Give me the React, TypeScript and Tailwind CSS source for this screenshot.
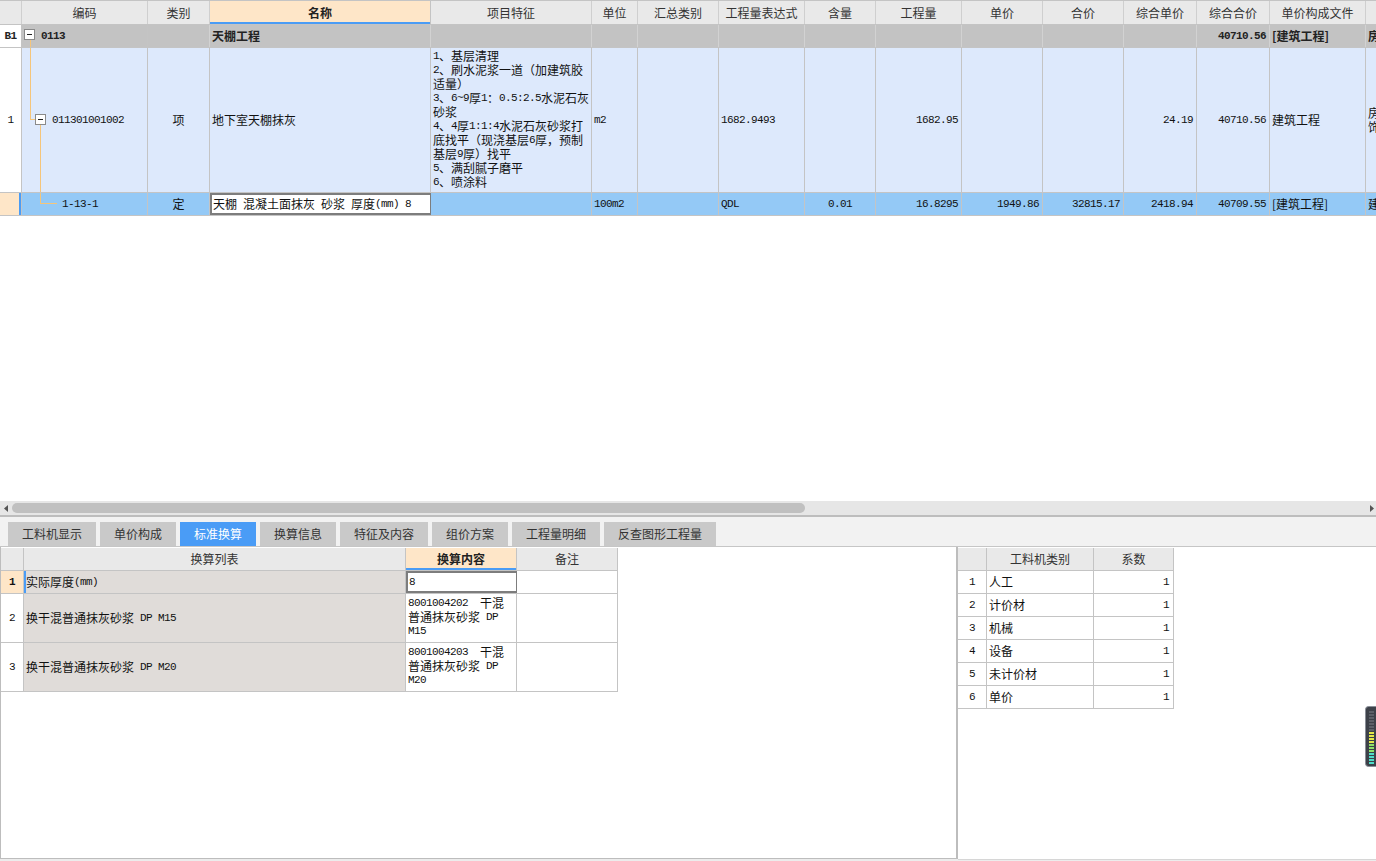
import React from "react";

const MONO = "font-['Liberation_Mono',monospace] text-[11px] tracking-[-0.6px] whitespace-pre";

function T({ s }: { s: string }) {
  const parts = s.split(/([\x20-\x7E]+)/).filter((p) => p !== "");
  return (
    <>
      {parts.map((p, i) =>
        /^[\x20-\x7E]+$/.test(p) ? (
          <span key={i} className={MONO}>
            {p}
          </span>
        ) : (
          <span key={i}>{p}</span>
        )
      )}
    </>
  );
}

function L({ s }: { s: string }) {
  return (
    <div className="h-[14px] flex items-center whitespace-nowrap">
      <T s={s} />
    </div>
  );
}

const W = [
  "w-[22px]",
  "w-[126px]",
  "w-[62px]",
  "w-[221px]",
  "w-[161px]",
  "w-[46px]",
  "w-[81px]",
  "w-[86px]",
  "w-[71px]",
  "w-[86px]",
  "w-[81px]",
  "w-[81px]",
  "w-[73px]",
  "w-[73px]",
  "w-[96px]",
  "w-[90px]",
];

const HEAD = [
  "",
  "编码",
  "类别",
  "名称",
  "项目特征",
  "单位",
  "汇总类别",
  "工程量表达式",
  "含量",
  "工程量",
  "单价",
  "合价",
  "综合单价",
  "综合合价",
  "单价构成文件",
  "",
];

const AL: Record<string, string> = {
  l: "justify-start pl-[2px]",
  c: "justify-center",
  r: "justify-end pr-[3px]",
};

type CP = {
  w: string;
  a?: "l" | "c" | "r";
  top?: boolean;
  x?: string;
  children?: React.ReactNode;
};

function C({ w, a = "l", top = false, x = "", children }: CP) {
  return (
    <div
      className={`${w} shrink-0 h-full flex ${top ? "items-start" : "items-center"} border-r border-[#c4c4c4] overflow-hidden whitespace-nowrap ${AL[a]} ${x}`}
    >
      {children}
    </div>
  );
}

function Box({ x }: { x: string }) {
  return (
    <div
      className={`absolute ${x} w-[11px] h-[11px] border border-[#8a8a8a] bg-white flex items-center justify-center`}
    >
      <div className="w-[5px] h-[1px] bg-[#222]" />
    </div>
  );
}

const FEATURES = [
  "1、基层清理",
  "2、刷水泥浆一道（加建筑胶",
  "适量）",
  "3、6~9厚1：0.5:2.5水泥石灰",
  "砂浆",
  "4、4厚1:1:4水泥石灰砂浆打",
  "底找平（现浇基层6厚，预制",
  "基层9厚）找平",
  "5、满刮腻子磨平",
  "6、喷涂料",
];

function MainTable() {
  return (
    <div className="h-[501px] shrink-0 overflow-hidden bg-white">
      {/* header */}
      <div className="flex w-max h-[25px] border-t border-b border-[#c4c4c4] bg-[#e9e9e9] text-[#333]">
        {HEAD.map((h, i) =>
          i === 3 ? (
            <C
              key={i}
              w={W[i]}
              a="c"
              x="bg-[#fee6c8] font-bold text-[#222] shadow-[inset_0_-2px_0_#4a9cf5]"
            >
              {h}
            </C>
          ) : (
            <C key={i} w={W[i]} a="c" x="border-[#cfcfcf]">
              {h}
            </C>
          )
        )}
      </div>

      {/* B1 row */}
      <div className="flex w-max h-[23px] border-b border-[#c4c4c4] bg-[#c3c3c3] font-bold text-[#222]">
        <C w={W[0]} a="c" x="bg-white">
          <T s="B1" />
        </C>
        <C w={W[1]} x="relative !pl-[19px]">
          <Box x="left-[2px] top-[4px]" />
          <div className="absolute left-[8px] top-[15px] bottom-0 w-[1px] bg-[#f5c57a]" />
          <T s="0113" />
        </C>
        <C w={W[2]} x="border-[#d2d2d2]" />
        <C w={W[3]} x="border-[#d2d2d2]">天棚工程</C>
        <C w={W[4]} x="border-[#d2d2d2]" />
        <C w={W[5]} x="border-[#d2d2d2]" />
        <C w={W[6]} x="border-[#d2d2d2]" />
        <C w={W[7]} x="border-[#d2d2d2]" />
        <C w={W[8]} x="border-[#d2d2d2]" />
        <C w={W[9]} x="border-[#d2d2d2]" />
        <C w={W[10]} x="border-[#d2d2d2]" />
        <C w={W[11]} x="border-[#d2d2d2]" />
        <C w={W[12]} x="border-[#d2d2d2]" />
        <C w={W[13]} a="r" x="border-[#d2d2d2]">
          <T s="40710.56" />
        </C>
        <C w={W[14]} x="border-[#d2d2d2]">
          [建筑工程]
        </C>
        <C w={W[15]} x="border-[#d2d2d2]">房屋建筑与装饰工程</C>
      </div>

      {/* Row 1 */}
      <div className="flex w-max h-[145px] border-b border-[#c4c4c4] bg-[#dde9fc] text-[#111]">
        <C w={W[0]} a="c" x="bg-white">
          <T s="1" />
        </C>
        <C w={W[1]} x="relative !pl-[30px]">
          <div className="absolute left-[8px] top-0 h-[71px] w-[1px] bg-[#f5c57a]" />
          <div className="absolute left-[8px] top-[71px] h-[1px] w-[5px] bg-[#f5c57a]" />
          <Box x="left-[13px] top-[66px]" />
          <div className="absolute left-[18px] top-[77px] bottom-0 w-[1px] bg-[#f5c57a]" />
          <T s="011301001002" />
        </C>
        <C w={W[2]} a="c">
          项
        </C>
        <C w={W[3]}>地下室天棚抹灰</C>
        <C w={W[4]} top x="pt-[1px]">
          <div className="flex flex-col">
            {FEATURES.map((f, i) => (
              <L key={i} s={f} />
            ))}
          </div>
        </C>
        <C w={W[5]}>
          <T s="m2" />
        </C>
        <C w={W[6]} />
        <C w={W[7]}>
          <T s="1682.9493" />
        </C>
        <C w={W[8]} />
        <C w={W[9]} a="r">
          <T s="1682.95" />
        </C>
        <C w={W[10]} />
        <C w={W[11]} />
        <C w={W[12]} a="r">
          <T s="24.19" />
        </C>
        <C w={W[13]} a="r">
          <T s="40710.56" />
        </C>
        <C w={W[14]}>建筑工程</C>
        <C w={W[15]}>
          <div className="flex flex-col">
            <L s="房屋建筑与装" />
            <L s="饰工程" />
          </div>
        </C>
      </div>

      {/* Row 2 */}
      <div className="flex w-max h-[23px] border-b border-[#c4c4c4] bg-[#94c9f6] text-[#111]">
        <C w={W[0]} x="bg-[#fee6c8] shadow-[inset_-2px_0_0_#4a9cf5]" />
        <C w={W[1]} x="relative !pl-[40px]">
          <div className="absolute left-[18px] top-0 h-[10px] w-[1px] bg-[#f5c57a]" />
          <div className="absolute left-[18px] top-[10px] h-[1px] w-[17px] bg-[#f5c57a]" />
          <T s="1-13-1" />
        </C>
        <C w={W[2]} a="c">
          定
        </C>
        <C w={W[3]} x="bg-white border-2 !border-[#7d7d7d] !pl-[1px]">
          <T s="天棚 混凝土面抹灰 砂浆 厚度(mm) 8" />
        </C>
        <C w={W[4]} />
        <C w={W[5]}>
          <T s="100m2" />
        </C>
        <C w={W[6]} />
        <C w={W[7]}>
          <T s="QDL" />
        </C>
        <C w={W[8]} a="c">
          <T s="0.01" />
        </C>
        <C w={W[9]} a="r">
          <T s="16.8295" />
        </C>
        <C w={W[10]} a="r">
          <T s="1949.86" />
        </C>
        <C w={W[11]} a="r">
          <T s="32815.17" />
        </C>
        <C w={W[12]} a="r">
          <T s="2418.94" />
        </C>
        <C w={W[13]} a="r">
          <T s="40709.55" />
        </C>
        <C w={W[14]}>[建筑工程]</C>
        <C w={W[15]}>建筑工程</C>
      </div>
    </div>
  );
}

function Scrollbar() {
  return (
    <div className="h-[14px] shrink-0 bg-[#e6e6e6] flex items-center">
      <div className="w-[12px] flex justify-center">
        <svg width="4" height="7" viewBox="0 0 4 7">
          <path d="M4 0 L0 3.5 L4 7Z" fill="#555" />
        </svg>
      </div>
      <div className="w-[793px] h-[10px] rounded-full bg-[#c0c0c0]" />
      <div className="flex-1" />
      <div className="w-[8px] flex justify-center">
        <svg width="4" height="7" viewBox="0 0 4 7">
          <path d="M0 0 L4 3.5 L0 7Z" fill="#555" />
        </svg>
      </div>
    </div>
  );
}

const TABS = [
  "工料机显示",
  "单价构成",
  "标准换算",
  "换算信息",
  "特征及内容",
  "组价方案",
  "工程量明细",
  "反查图形工程量",
];

function Tabs() {
  return (
    <div className="h-[29px] shrink-0 bg-[#f2f2f2] flex items-end gap-[4px] pl-[8px]">
      {TABS.map((t) =>
        t === "标准换算" ? (
          <div
            key={t}
            className="h-[24px] px-[14px] flex items-center bg-[#4a9cf6] text-white"
          >
            {t}
          </div>
        ) : (
          <div
            key={t}
            className="h-[24px] px-[14px] flex items-center bg-[#c9c9c9] text-[#333]"
          >
            {t}
          </div>
        )
      )}
    </div>
  );
}

const LW = ["w-[23px]", "w-[382px]", "w-[111px]", "w-[101px]"];

function LeftTable() {
  return (
    <div className="flex flex-col w-max">
      <div className="flex h-[23px] border-b border-[#c4c4c4] bg-[#e9e9e9] text-[#333]">
        <C w={LW[0]} />
        <C w={LW[1]} a="c">
          换算列表
        </C>
        <C
          w={LW[2]}
          a="c"
          x="bg-[#fee6c8] font-bold text-[#222] shadow-[inset_0_-2px_0_#4a9cf5]"
        >
          换算内容
        </C>
        <C w={LW[3]} a="c">
          备注
        </C>
      </div>
      <div className="flex h-[23px] border-b border-[#c4c4c4] text-[#111]">
        <C w={LW[0]} a="c" x="bg-[#fee6c8] font-bold">
          <T s="1" />
        </C>
        <C w={LW[1]} x="bg-[#e0dcd9] shadow-[inset_2px_0_0_#4a9cf5]">
          <T s="实际厚度(mm)" />
        </C>
        <C w={LW[2]} x="bg-white border-2 !border-[#7d7d7d] !pl-[1px]">
          <T s="8" />
        </C>
        <C w={LW[3]} x="bg-white" />
      </div>
      {[
        ["2", "换干混普通抹灰砂浆 DP M15", "8001004202  干混", "M15"],
        ["3", "换干混普通抹灰砂浆 DP M20", "8001004203  干混", "M20"],
      ].map((r) => (
        <div key={r[0]} className="flex h-[49px] border-b border-[#c4c4c4] text-[#111]">
          <C w={LW[0]} a="c" x="bg-white">
            <T s={r[0]} />
          </C>
          <C w={LW[1]} x="bg-[#e0dcd9]">
            <T s={r[1]} />
          </C>
          <C w={LW[2]} top x="bg-white pt-[2px]">
            <div className="flex flex-col">
              <L s={r[2]} />
              <L s="普通抹灰砂浆 DP" />
              <L s={r[3]} />
            </div>
          </C>
          <C w={LW[3]} x="bg-white" />
        </div>
      ))}
    </div>
  );
}

const RW = ["w-[29px]", "w-[107px]", "w-[80px]"];
const RROWS = ["人工", "计价材", "机械", "设备", "未计价材", "单价"];

function RightTable() {
  return (
    <div className="flex flex-col w-max">
      <div className="flex h-[23px] border-b border-[#c4c4c4] bg-[#e9e9e9] text-[#333]">
        <C w={RW[0]} />
        <C w={RW[1]} a="c">
          工料机类别
        </C>
        <C w={RW[2]} a="c">
          系数
        </C>
      </div>
      {RROWS.map((r, i) => (
        <div key={r} className="flex h-[23px] border-b border-[#c4c4c4] text-[#111]">
          <C w={RW[0]} a="c">
            <T s={String(i + 1)} />
          </C>
          <C w={RW[1]}>{r}</C>
          <C w={RW[2]} a="r" x="!pr-[4px]">
            <T s="1" />
          </C>
        </div>
      ))}
    </div>
  );
}

function Meter() {
  const bars = [];
  for (let i = 0; i < 18; i++) {
    let c = "#5c6068";
    if (i >= 7 && i < 11) c = "#e4e84a";
    else if (i >= 11 && i < 14) c = "#8fe36a";
    else if (i >= 14) c = "#4fdcc8";
    bars.push(<rect key={i} x="4" y={5 + i * 3} width="5" height="2" fill={c} />);
  }
  return (
    <div className="absolute left-[1365px] top-[706px]">
      <svg width="12" height="61" viewBox="0 0 12 61">
        <rect x="0.5" y="0.5" width="14" height="60" rx="3" fill="#3d4149" stroke="#8a8f98" />
        {bars}
      </svg>
    </div>
  );
}

export default function App() {
  return (
    <div className="w-[1376px] h-[861px] overflow-hidden bg-white relative flex flex-col font-['Noto_Sans_CJK_SC',sans-serif] text-[12px] leading-[14px] text-[#111]">
      <MainTable />
      <Scrollbar />
      <div className="h-[2px] shrink-0 bg-[#bdbdbd]" />
      <Tabs />
      <div className="h-[1px] shrink-0 bg-[#c6c6c6]" />
      <div className="flex items-start h-[314px] shrink-0 bg-[#ececec]">
        <div className="w-[958px] h-[312px] shrink-0 bg-white border-l border-b border-r-2 border-[#bdbdbd] pt-[1px]">
          <LeftTable />
        </div>
        <div className="flex-1 h-[313px] bg-white border-b border-[#d6d6d6] pt-[1px]">
          <RightTable />
        </div>
      </div>
      <Meter />
    </div>
  );
}
